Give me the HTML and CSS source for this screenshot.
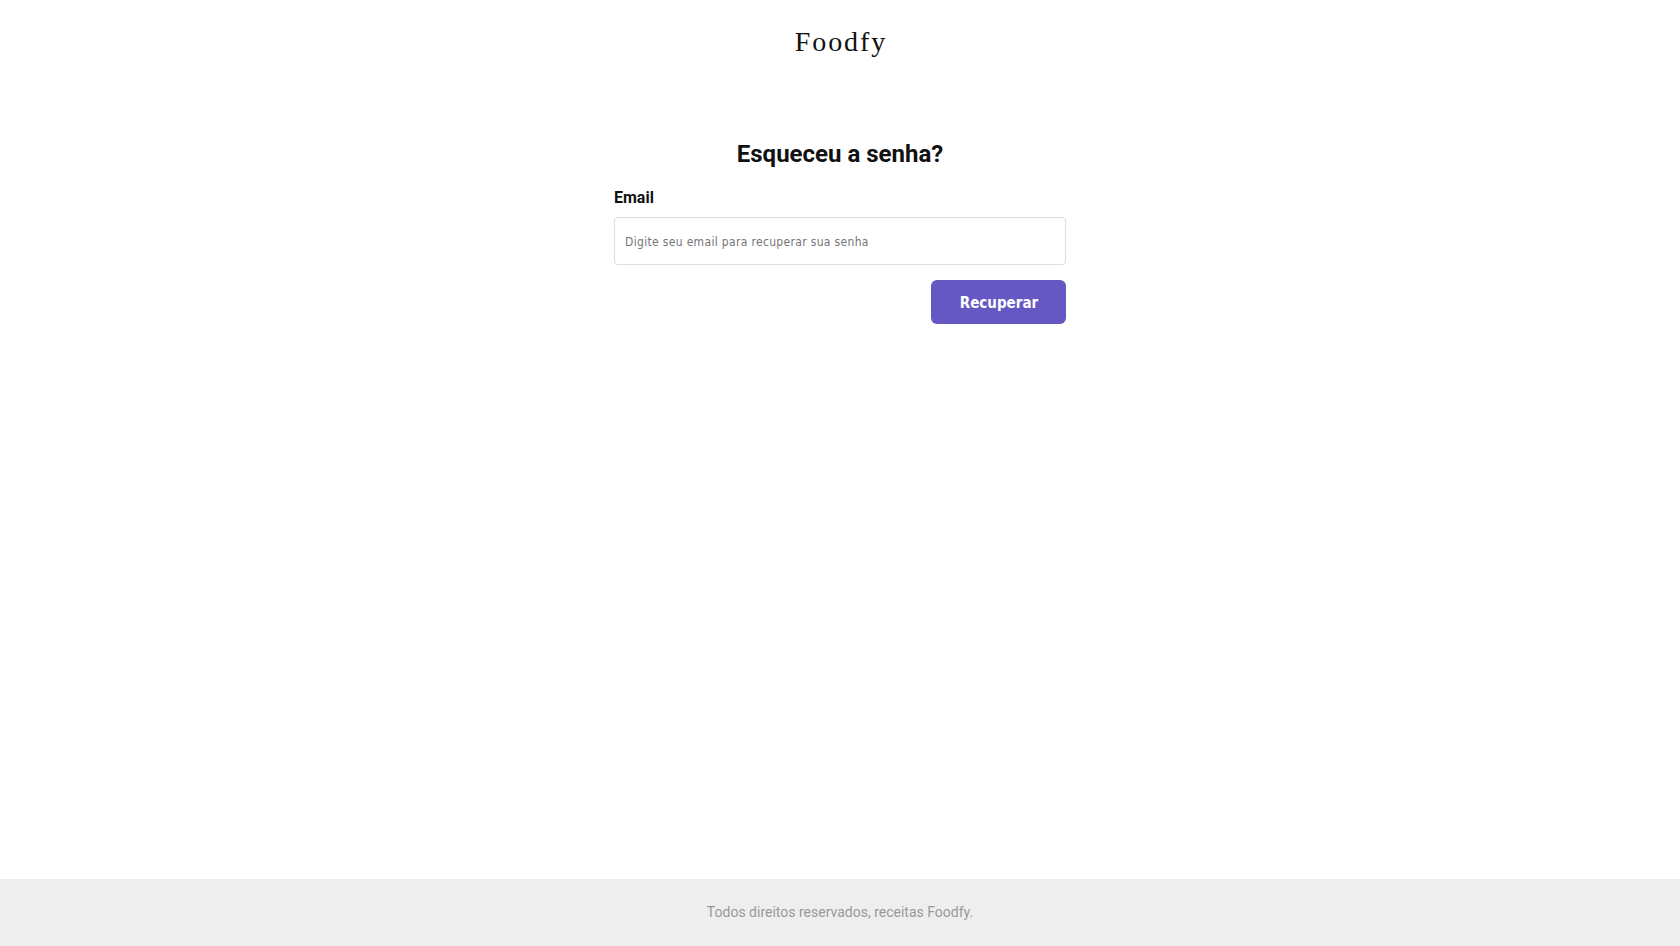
FILE: index.html
```html
<!DOCTYPE html>
<html lang="pt-BR">
<head>
<meta charset="utf-8">
<title>Foodfy</title>
<link rel="stylesheet" href="styles.css">
</head>
<body>
<header class="header"><a class="logo">Foodfy</a></header>
<main class="content">
<h1 class="title">Esqueceu a senha?</h1>
<form class="form">
<label class="label" for="email">Email</label>
<input class="input" id="email" type="email" placeholder="Digite seu email para recuperar sua senha">
<button class="button" type="button">Recuperar</button>
</form>
</main>
<footer class="footer"><p class="copyright">Todos direitos reservados, receitas Foodfy.</p></footer>
</body>
</html>
```

FILE: styles.css
```css
* { box-sizing: border-box; margin: 0; padding: 0; }
body {
  min-height: 100vh;
  display: flex;
  flex-direction: column;
  background: #fff;
  color: #111;
  font-family: Roboto, sans-serif;
}
.header { height: 83px; display: flex; justify-content: center; padding-top: 26px; }
.logo {
  font-family: "Liberation Serif", serif;
  font-size: 28px;
  line-height: 32px;
  letter-spacing: 1.9px;
  margin-right: -2px;
}
.content { flex: 1; width: 452px; margin: 0 auto; padding-top: 57px; }
.title { font-size: 24px; line-height: 28px; font-weight: 700; text-align: center; }
.form { display: flex; flex-direction: column; margin-top: 20px; }
.label { font-size: 16px; line-height: 19px; font-weight: 700; }
.input {
  height: 48px;
  margin-top: 10px;
  padding: 2px 10px 0;
  border: 1px solid #ddd;
  border-radius: 4px;
  background: #fff;
  font-family: "DejaVu Sans Condensed", "DejaVu Sans", sans-serif;
  font-size: 12px;
  font-stretch: condensed;
  letter-spacing: 0.33px;
}
.input::placeholder { color: #757575; }
.button {
  align-self: flex-end;
  width: 135px;
  height: 44px;
  margin-top: 15px;
  padding: 2px 0 0 1px;
  border: 0;
  border-radius: 6px;
  background: #6558c3;
  color: #fff;
  font-family: "DejaVu Sans Condensed", "DejaVu Sans", sans-serif;
  font-size: 15px;
  font-stretch: condensed;
  font-weight: 700;
}
.footer { height: 67px; display: flex; justify-content: center; padding-top: 25px; background: #eee; }
.copyright { font-size: 14px; line-height: 16px; color: #999; }
```
